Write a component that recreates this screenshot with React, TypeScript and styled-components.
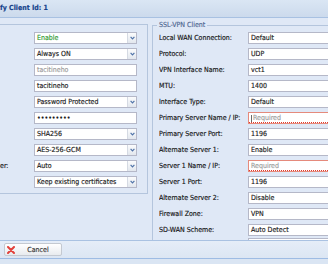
import React from 'react';
import styled, { createGlobalStyle } from 'styled-components';

const Global = createGlobalStyle`
  html, body { margin: 0; padding: 0; width: 328px; height: 264px; overflow: hidden; background: #dfe8f6; }
  body { font-family: "DejaVu Sans Condensed", "DejaVu Sans", sans-serif; font-size: 7px; color: #222; -webkit-text-stroke: 0.15px currentColor; }
  * { box-sizing: border-box; }
`;

const Win = styled.div`
  width: 328px;
  height: 264px;
  display: flex;
  flex-direction: column;
  background: #dfe8f6;
  overflow: hidden;
`;

const Header = styled.div`
  height: 18px;
  flex-shrink: 0;
  border-bottom: 1px solid #a8c1e2;
  background: linear-gradient(#dae6f4, #ccdaec);
  display: flex;
  align-items: center;
  padding-bottom: 1px;
  font-weight: bold;
  color: #15428b;
  font-size: 7px;
  white-space: nowrap;
`;

const Body = styled.div`
  height: 222px;
  flex-shrink: 0;
  overflow: hidden;
  display: flex;
  align-items: flex-start;
  gap: 4px;
`;

const LeftSet = styled.div`
  width: 148px;
  flex-shrink: 0;
  margin-top: 6px;
  border: 1px solid #b4c5dd;
  border-left: none;
  padding: 7px 10px 5px 0;
  display: flex;
  flex-direction: column;
  gap: 4px;
`;

const RightSet = styled.fieldset`
  width: 200px;
  min-width: 0;
  flex-shrink: 0;
  margin: 3px 0 0 0;
  padding: 3px 0 0 6px;
  border: 1px solid #b4c5dd;
  display: flex;
  flex-direction: column;
  gap: 4px;
`;

const Legend = styled.legend`
  font-size: 7px;
  line-height: 8px;
  padding: 0 2px;
  margin-left: -2px;
  color: #4d6690;
`;

const Row = styled.div<{ $tight?: boolean }>`
  height: 12px;
  display: flex;
  align-items: center;
  margin-top: ${p => (p.$tight ? '-2px' : '0')};
`;

const Label = styled.div<{ $w: number }>`
  width: ${p => p.$w}px;
  flex-shrink: 0;
  white-space: nowrap;
  overflow: hidden;
  color: #141414;
`;

const Field = styled.div<{ $w: number; $invalid?: boolean }>`
  width: ${p => p.$w}px;
  height: 12px;
  flex-shrink: 0;
  display: flex;
  align-items: stretch;
  background-color: #fff;
  border: 1px solid ${p => (p.$invalid ? '#e58a7c' : '#b5b8c8')};
  ${p =>
    p.$invalid
      ? `background-image: repeating-linear-gradient(90deg, #e03b2e 0 1px, transparent 1px 2px);
         background-size: 100% 1px; background-position: left bottom; background-repeat: no-repeat;`
      : ''}
`;

const Value = styled.span<{ $tone?: 'green' | 'grey' | 'dark' }>`
  flex: 1;
  min-width: 0;
  padding-left: 2px;
  display: flex;
  align-items: center;
  white-space: nowrap;
  overflow: hidden;
  line-height: 10px;
  color: ${p => (p.$tone === 'green' ? '#2f9a2f' : p.$tone === 'grey' ? '#9c9c9c' : '#1a1a1a')};
`;

const Caret = styled.span`
  width: 1px;
  height: 7px;
  background: #6a6a6a;
  margin-right: 1px;
`;

const Trigger = styled.span`
  width: 9px;
  flex-shrink: 0;
  border-left: 1px solid #d5dae3;
  background: linear-gradient(#fbfcfd, #e2e7ee);
  display: flex;
  align-items: center;
  justify-content: center;
`;

const Toolbar = styled.div`
  height: 18px;
  flex-shrink: 0;
  border-top: 1px solid #aac2e2;
  background: linear-gradient(#e5edf8, #dce6f3);
  display: flex;
  align-items: center;
  padding: 0 4px;
`;

const Button = styled.button`
  width: 58px;
  height: 13px;
  padding: 0 0 0 2px;
  border: 1px solid #c4c9d1;
  border-radius: 2px;
  background: linear-gradient(#ffffff, #e8ebef);
  display: flex;
  align-items: center;
  font-family: inherit;
  font-size: 7px;
  color: #333;
  cursor: pointer;
`;

const ButtonText = styled.span`
  flex: 1;
  text-align: center;
`;

const BottomFrame = styled.div`
  flex: 1;
  border-top: 1px solid #9ebce4;
  background: #dae5f3;
`;

const Chevron = () => (
  <svg width="5" height="4" viewBox="0 0 5 4">
    <path d="M0.6 0.8 L2.5 2.8 L4.4 0.8" fill="none" stroke="#4f73a8" strokeWidth="1.2" />
  </svg>
);

const CancelIcon = () => (
  <svg width="8" height="8" viewBox="0 0 8 8">
    <path d="M1 1 L7 7 M7 1 L1 7" stroke="#e2413b" strokeWidth="2" strokeLinecap="round" />
  </svg>
);

type LeftItem = { label?: string; value: string; combo?: boolean; tone?: 'green' | 'grey' };

const leftItems: LeftItem[] = [
  { value: 'Enable', combo: true, tone: 'green' },
  { value: 'Always ON', combo: true },
  { value: 'tacitineho', tone: 'grey' },
  { value: 'tacitineho' },
  { value: 'Password Protected', combo: true },
  { value: '•••••••••' },
  { value: 'SHA256', combo: true },
  { value: 'AES-256-GCM', combo: true },
  { label: 'er:', value: 'Auto', combo: true },
  { value: 'Keep existing certificates', combo: true },
];

type RightItem = { label: string; value: string; required?: boolean; focus?: boolean };

const rightItems: RightItem[] = [
  { label: 'Local WAN Connection:', value: 'Default' },
  { label: 'Protocol:', value: 'UDP' },
  { label: 'VPN Interface Name:', value: 'vct1' },
  { label: 'MTU:', value: '1400' },
  { label: 'Interface Type:', value: 'Default' },
  { label: 'Primary Server Name / IP:', value: 'Required', required: true, focus: true },
  { label: 'Primary Server Port:', value: '1196' },
  { label: 'Alternate Server 1:', value: 'Enable' },
  { label: 'Server 1 Name / IP:', value: 'Required', required: true },
  { label: 'Server 1 Port:', value: '1196' },
  { label: 'Alternate Server 2:', value: 'Disable' },
  { label: 'Firewall Zone:', value: 'VPN' },
  { label: 'SD-WAN Scheme:', value: 'Auto Detect' },
];

export default function App() {
  return (
    <>
      <Global />
      <Win>
        <Header>fy Client Id: 1</Header>
        <Body>
          <LeftSet>
            {leftItems.map((it, i) => (
              <Row key={i}>
                <Label $w={34}>{it.label ?? ''}</Label>
                <Field $w={103}>
                  <Value $tone={it.tone}>{it.value}</Value>
                  {it.combo && (
                    <Trigger>
                      <Chevron />
                    </Trigger>
                  )}
                </Field>
              </Row>
            ))}
          </LeftSet>
          <RightSet>
            <Legend>SSL-VPN Client</Legend>
            {rightItems.map((it, i) => (
              <Row key={i}>
                <Label $w={89}>{it.label}</Label>
                <Field $w={110} $invalid={it.required}>
                  <Value $tone={it.required ? 'grey' : undefined}>
                    {it.focus && <Caret />}
                    {it.value}
                  </Value>
                </Field>
              </Row>
            ))}
            <Row $tight>
              <Label $w={89} />
              <Field $w={110} />
            </Row>
          </RightSet>
        </Body>
        <Toolbar>
          <Button type="button">
            <CancelIcon />
            <ButtonText>Cancel</ButtonText>
          </Button>
        </Toolbar>
        <BottomFrame />
      </Win>
    </>
  );
}
